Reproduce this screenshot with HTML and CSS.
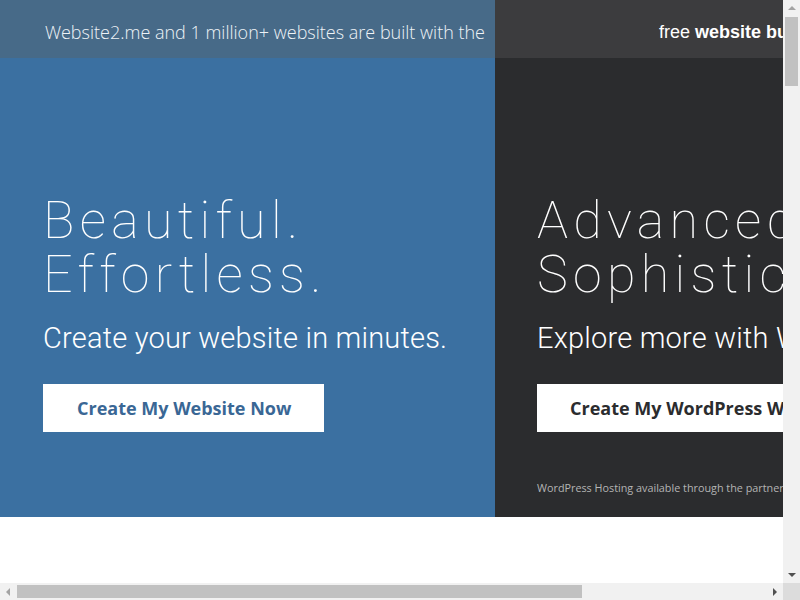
FILE: index.html
```html
<!DOCTYPE html>
<html lang="en">
<head>
<meta charset="utf-8">
<title>Website2.me</title>
<link rel="stylesheet" href="styles.css">
</head>
<body>
<div class="page">
  <div class="topbar">
    <div class="topbar-left">Website2.me and 1 million+ websites are built with the</div>
    <div class="topbar-right">free <b>website builder</b> by Website2.me</div>
  </div>
  <div class="hero">
    <section class="panel panel-blue">
      <h1 class="headline">Beautiful.<br>Effortless.</h1>
      <p class="sub">Create your website in minutes.</p>
      <a class="btn btn-blue" href="#">Create My Website Now</a>
    </section>
    <section class="panel panel-dark">
      <h1 class="headline">Advanced.<br>Sophisticated.</h1>
      <p class="sub">Explore more with WordPress.</p>
      <a class="btn btn-dark" href="#">Create My WordPress Website</a>
      <p class="note">WordPress Hosting available through the partnership with Website2.me</p>
    </section>
  </div>
  <div class="rest"></div>
</div>
<div class="sb sb-v" aria-hidden="true">
  <span class="arrow arrow-up"></span>
  <span class="thumb-v"></span>
  <span class="arrow arrow-down"></span>
</div>
<div class="sb sb-h" aria-hidden="true">
  <span class="arrow arrow-left"></span>
  <span class="thumb-h"></span>
  <span class="arrow arrow-right"></span>
</div>
<div class="sb-corner" aria-hidden="true"></div>
</body>
</html>
```

FILE: styles.css
```css
html, body {
  margin: 0;
  padding: 0;
  background: #ffffff;
  overflow: hidden;
}

.page {
  width: 1038px;
}

.topbar {
  display: flex;
  height: 58px;
}

.topbar-left {
  width: 495px;
  box-sizing: border-box;
  background: #476a88;
  color: #eef3f7;
  font-family: "Open Sans", sans-serif;
  font-weight: 300;
  font-size: 18px;
  line-height: 64px;
  text-align: right;
  padding-right: 10px;
  white-space: nowrap;
  overflow: hidden;
}

.topbar-right {
  flex: 1;
  background: #3c3c3e;
  color: #ffffff;
  font-family: "Liberation Sans", Arial, sans-serif;
  font-size: 18px;
  line-height: 64px;
  padding-left: 164px;
  white-space: nowrap;
  overflow: hidden;
}

.topbar-right b {
  font-weight: bold;
}

.hero {
  display: flex;
  height: 459px;
}

.panel {
  box-sizing: border-box;
  display: flex;
  flex-direction: column;
  align-items: flex-start;
  padding: 136px 0 21px 43px;
  color: #ffffff;
  overflow: hidden;
  white-space: nowrap;
}

.panel-blue {
  width: 495px;
  background: #3b70a1;
}

.panel-dark {
  flex: 1;
  background: #2b2c2e;
  padding-left: 42px;
}

.headline {
  margin: 0;
  font-family: Roboto, sans-serif;
  font-weight: 100;
  font-size: 52px;
  line-height: 54px;
  letter-spacing: 5.3px;
}

.sub {
  margin: 18px 0 0;
  font-family: Roboto, sans-serif;
  font-weight: 300;
  font-size: 29px;
  line-height: 36px;
  letter-spacing: 0.2px;
}

.btn {
  display: block;
  margin-top: 28px;
  height: 48px;
  box-sizing: border-box;
  padding: 0 33px 0 34px;
  background: #ffffff;
  font-family: "Open Sans", sans-serif;
  font-weight: 700;
  font-size: 18px;
  line-height: 48px;
  text-decoration: none;
}

.btn-blue {
  color: #3a6795;
}

.btn-dark {
  color: #2b2c2e;
  padding-left: 33px;
}

.note {
  margin: auto 0 0;
  font-family: "Open Sans", sans-serif;
  font-size: 10.8px;
  line-height: 16px;
  color: #b4b4b4;
}

.rest {
  height: 4121px;
  background: #ffffff;
}

/* scrollbars of the window, drawn over the page */
.sb {
  position: fixed;
  background: #f1f1f1;
  display: flex;
  align-items: center;
  justify-content: space-between;
}

.sb-v {
  top: 0;
  right: 0;
  width: 17px;
  height: 583px;
  flex-direction: column;
}

.sb-h {
  left: 0;
  bottom: 0;
  width: 783px;
  height: 17px;
}

.sb-corner {
  position: fixed;
  right: 0;
  bottom: 0;
  width: 17px;
  height: 17px;
  background: #dcdcdc;
}

.arrow {
  display: block;
  width: 0;
  height: 0;
}

.arrow-up {
  margin-top: 6px;
  border-left: 4px solid transparent;
  border-right: 4px solid transparent;
  border-bottom: 4px solid #a3a3a3;
}

.arrow-down {
  margin-bottom: 6px;
  border-left: 4px solid transparent;
  border-right: 4px solid transparent;
  border-top: 4px solid #505050;
}

.arrow-left {
  margin-left: 6px;
  border-top: 4px solid transparent;
  border-bottom: 4px solid transparent;
  border-right: 4px solid #a3a3a3;
}

.arrow-right {
  margin-right: 6px;
  border-top: 4px solid transparent;
  border-bottom: 4px solid transparent;
  border-left: 4px solid #505050;
}

.thumb-v {
  width: 13px;
  height: 69px;
  background: #c1c1c1;
  margin-top: 7px;
  margin-bottom: auto;
}

.thumb-h {
  height: 13px;
  width: 565px;
  background: #c1c1c1;
  margin-left: 7px;
  margin-right: auto;
}
```
